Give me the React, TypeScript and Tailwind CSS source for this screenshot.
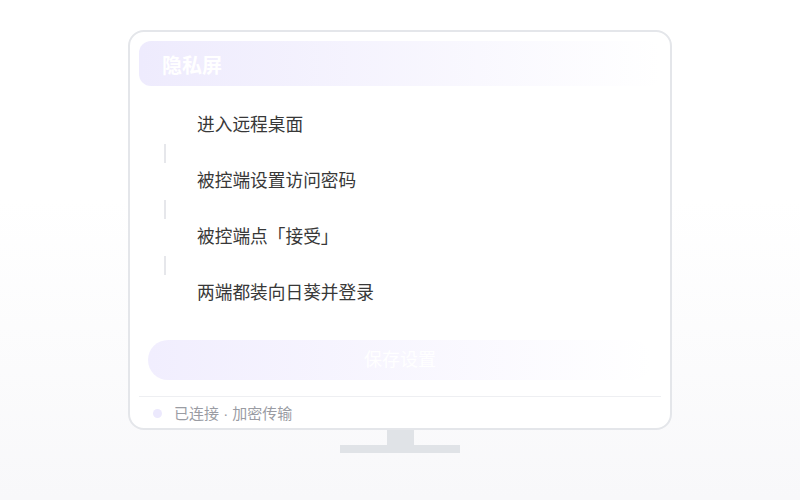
import React from 'react';

const STEPS = ['进入远程桌面', '被控端设置访问密码', '被控端点「接受」', '两端都装向日葵并登录'];

export default function App() {
  return (
    <div className="w-[800px] h-[500px] flex flex-col items-center pt-[30px] bg-gradient-to-b from-white from-40% to-[#f8f8fa] font-['Liberation_Sans','Noto_Sans_CJK_SC',sans-serif]">
      {/* Monitor */}
      <div className="w-[544px] h-[400px] border-2 border-[#e4e6ea] rounded-2xl bg-white flex flex-col px-[9px] pt-[9px] pb-[5px]">
        {/* Header */}
        <div className="h-[45px] shrink-0 rounded-xl bg-gradient-to-r from-[#eeebfd] to-white/0 flex items-center px-[23px] pt-1">
          <span className="text-[20px] font-bold text-white leading-none">隐私屏</span>
        </div>

        {/* Steps */}
        <div className="mt-[27px] flex flex-col">
          {STEPS.map((step, i) => (
            <div key={step}>
              {i > 0 && (
                <div className="h-[32px] flex items-center">
                  <div className="ml-[25px] w-[2px] h-[19px] bg-[#e6e7eb]" />
                </div>
              )}
              <div className="h-[24px] flex items-center pl-[58px] text-[17.7px] text-[#383838]">{step}</div>
            </div>
          ))}
        </div>

        {/* Save button */}
        <button className="mt-[35px] mx-[9px] h-[40px] shrink-0 rounded-full bg-gradient-to-r from-[#f1eefe] to-white/0 text-white text-[18px]">
          保存设置
        </button>

        {/* Footer */}
        <div className="mt-[16px] border-t border-[#eeeff2]" />
        <div className="pt-[7px] h-[26px] flex items-center gap-[12px] pl-[14px]">
          <span className="w-[9px] h-[9px] rounded-full bg-[#ece9fd]" />
          <span className="text-[15px] leading-[20px] text-[#9a9ca3]">已连接 · 加密传输</span>
        </div>
      </div>

      {/* Stand */}
      <div className="w-[27px] h-[15px] bg-[#e0e3e7]" />
      <div className="w-[120px] h-[8px] bg-[#e0e3e7]" />
    </div>
  );
}
